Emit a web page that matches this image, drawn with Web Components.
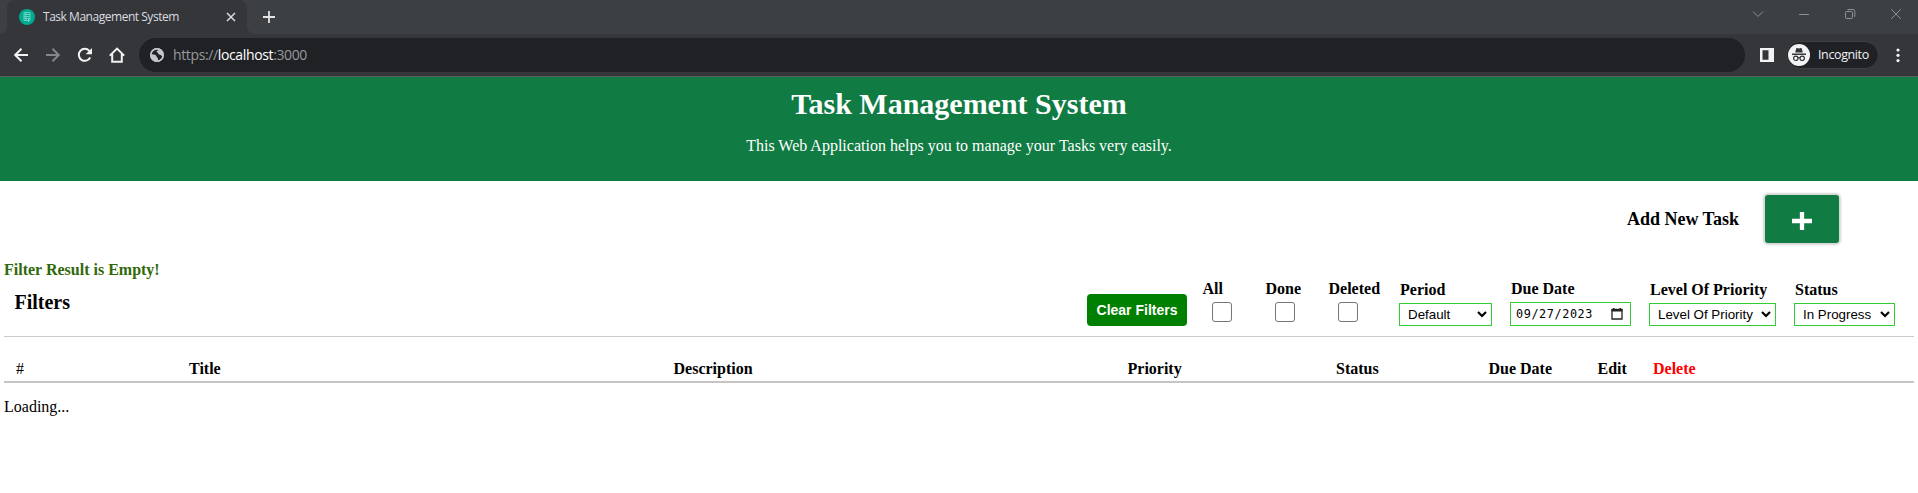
<!DOCTYPE html>
<html lang="en">
<head>
<meta charset="utf-8">
<title>Task Management System</title>
<style>
html,body{margin:0;padding:0;height:100%;background:#fff;overflow:hidden}
</style>
</head>
<body>
<task-app></task-app>
<script>
function define(name, html) {
  const t = document.createElement('template');
  t.innerHTML = html;
  customElements.define(name, class extends HTMLElement {
    constructor() {
      super();
      this.attachShadow({ mode: 'open' }).append(t.content.cloneNode(true));
    }
  });
}

define('tab-strip', `
<style>
:host{display:flex;height:34px;background:#3c4043;color:#dadce0;font:12px/34px "Open Sans","Noto Sans",sans-serif}
svg{display:block;flex:none}
.flare{width:7px;background:#35363a}
.flare i{display:block;height:34px;background:#3c4043;border-radius:0 0 7px 0}
.flare.r{width:8px}.flare.r i{border-radius:0 0 0 8px}
.tab{box-sizing:border-box;width:240px;height:34px;display:flex;align-items:center;background:#35363a;border-radius:8px 8px 0 0;padding:0 10px 0 12px}
.title{flex:1;margin-left:8px;letter-spacing:-.47px;white-space:nowrap;line-height:33px;height:34px}
.plus{margin:8px 0 0 5px}
.win{margin-left:auto;display:flex;gap:28px;padding:5px 13px 0 0}
</style>
<div class="flare"><i></i></div>
<div class="tab">
  <svg width="16" height="16" viewBox="0 0 16 16"><circle cx="8" cy="8" r="8" fill="#00a98f"/><path d="M5 3.5h6v8H5zM5 5.5h6M5 7.5h6M5 9.5h6M7 3.5v8M9.5 10v3.2" fill="none" stroke="#6fd6c6" stroke-width=".9"/></svg>
  <span class="title">Task Management System</span>
  <svg width="12" height="12" viewBox="0 0 12 12"><path d="M2 2l8 8M10 2l-8 8" stroke="#dadce0" stroke-width="1.5"/></svg>
</div>
<div class="flare r"><i></i></div>
<svg class="plus" width="18" height="18" viewBox="0 0 18 18"><path d="M9 3v12M3 9h12" stroke="#e2e4e6" stroke-width="1.8"/></svg>
<div class="win">
  <svg width="18" height="18" viewBox="0 0 18 18"><path d="M4 6.5l5 5 5-5" fill="none" stroke="#8e9194"/></svg>
  <svg width="18" height="18" viewBox="0 0 18 18"><path d="M4 9.5h10" stroke="#8e9194"/></svg>
  <svg width="18" height="18" viewBox="0 0 18 18"><rect x="4.500" y="6.500" width="7" height="7" rx="1.300" fill="none" stroke="#8e9194"/><path d="M6.500 4.500h5.500a1.800 1.800 0 0 1 1.800 1.800v5.500" fill="none" stroke="#8e9194"/></svg>
  <svg width="18" height="18" viewBox="0 0 18 18"><path d="M4.200 4.200l9.600 9.600M13.800 4.200l-9.600 9.600" stroke="#8e9194"/></svg>
</div>`);

define('address-bar', `
<style>
:host{box-sizing:border-box;display:flex;align-items:center;height:43px;background:#35363a;border-bottom:1px solid #5c5d60;padding:0 17px 0 12px;font:14px/34px "Open Sans","Noto Sans",sans-serif}
svg{display:block;flex:none}
.nav{display:flex;gap:14px;margin-right:13px}
.box{flex:1;box-sizing:border-box;height:34px;display:flex;align-items:center;border-radius:17px;background:#202124;color:#96999d;padding-left:10px}
.url{margin-left:8px;letter-spacing:-.37px;white-space:nowrap;height:34px;line-height:34px}
b{font-weight:400;color:#fff}
.side{margin:0 11px 0 14px}
.pill{box-sizing:border-box;width:93px;height:28px;border:1px solid #3e4043;border-radius:14px;background:#202124;display:flex;align-items:center;padding-left:1px;color:#f1f3f4;font-size:12.500px;letter-spacing:-.38px;white-space:nowrap}
.pill span{margin-left:8px;height:26px;line-height:25px}
.dots{margin-left:15px;margin-right:-1px}
</style>
<div class="nav">
  <svg width="18" height="18" viewBox="0 0 18 18"><path d="M16 9H3.500M9.500 2.800L3.200 9l6.300 6.200" fill="none" stroke="#f1f3f4" stroke-width="2"/></svg>
  <svg width="18" height="18" viewBox="0 0 18 18"><path d="M2 9h12.500M8.500 2.800L14.800 9l-6.300 6.200" fill="none" stroke="#85868a" stroke-width="1.900"/></svg>
  <svg width="18" height="18" viewBox="0 0 18 18"><path d="M14.200 11.500A6 6 0 1 1 13.300 4.800L15 6.500" fill="none" stroke="#f1f3f4" stroke-width="2"/><path d="M16 2v6.300H9.700z" fill="#f1f3f4"/></svg>
  <svg width="18" height="18" viewBox="0 0 18 18"><path d="M1.800 9.600L9 2.600l7.200 7M4.200 8v7.800h9.600V8" fill="none" stroke="#f1f3f4" stroke-width="2"/></svg>
</div>
<div class="box">
  <svg width="16" height="16" viewBox="0 0 16 16"><circle cx="8" cy="8" r="6.900" fill="#c4c7ca"/><path d="M9.500 2.400C8 3.500 7 3.600 6.900 5.200c1.500-.2 2.200.8 2.200 1.800 1.600-.2 2.400.4 4.500 1.400-.3 2.400-2 4.600-4.300 5.200.6-1.600.3-2.600-.7-3.100-1-.4-.8-1.500-1.700-2-1.300-.6-3-.5-4.500-.4C2.200 5 5 2.200 9.500 2.400z" fill="#202124" transform="rotate(8 8 8)"/><circle cx="8" cy="8" r="6.200" fill="none" stroke="#c4c7ca" stroke-width="1.500"/></svg>
  <span class="url">https://<b>localhost</b>:3000</span>
</div>
<svg class="side" width="16" height="16" viewBox="0 0 16 16"><path d="M1 1h14v14H1zM3.500 3.300v9.400h6V3.300z" fill="#f1f3f4" fill-rule="evenodd"/></svg>
<div class="pill">
  <svg width="22" height="22" viewBox="0 0 22 22"><circle cx="11" cy="11" r="11" fill="#f1f3f4"/><path d="M7.200 8.600l1-4q.3-.7 1-.5l1.800.5 1.800-.5q.7-.2 1 .5l1 4zM4 9.600h14v1.300H4z" fill="#35363a"/><g fill="none" stroke="#35363a" stroke-width="1.200"><circle cx="7.800" cy="14.300" r="2.200"/><circle cx="14.200" cy="14.300" r="2.200"/><path d="M10 13.900q1-.6 2 0"/></g></svg>
  <span>Incognito</span>
</div>
<svg class="dots" width="8" height="18" viewBox="0 0 8 18"><g fill="#f1f3f4"><circle cx="4" cy="4" r="1.600"/><circle cx="4" cy="9.300" r="1.600"/><circle cx="4" cy="14.600" r="1.600"/></g></svg>`);

define('page-banner', `
<style>
:host{box-sizing:border-box;display:block;height:104px;background:#107b43;color:#fff;text-align:center;padding-top:10px}
h1{margin:0;font-size:30px;line-height:34px;font-weight:700}
p{margin:16px 0 0;font-size:16px;line-height:18px}
</style>
<h1><slot name="title"></slot></h1><p><slot></slot></p>`);

define('add-task', `
<style>
:host{display:flex;justify-content:flex-end;align-items:center;height:48px;padding:14px 79px 0 0;font-weight:700;font-size:18px;line-height:20px}
button{display:grid;place-items:center;width:74px;height:48px;margin:0 0 0 26px;padding:0;border:0;border-radius:3px;background:#107b43;box-shadow:0 0 2px 2px #d6d6d6}
svg{display:block;margin-top:3px}
</style>
<span><slot></slot></span>
<button aria-label="Add"><svg width="20" height="18" viewBox="0 0 20 18"><path d="M0 9h20M10 0v18" stroke="#fff" stroke-width="4.300"/></svg></button>`);

define('check-filter', `
<style>
:host{display:block;width:63px;font-weight:700;line-height:18px}
i{display:block;box-sizing:border-box;width:20px;height:20px;margin:4px 0 4px 9px;border:1px solid #767676;border-radius:3px;background:#fff}
span{margin-left:-.5px}
</style>
<span><slot></slot></span><i></i>`);

define('select-filter', `
<style>
:host{display:block;font-weight:700;line-height:18px}
.l{padding-left:1px;display:block}
.c{box-sizing:border-box;display:flex;justify-content:space-between;align-items:center;height:23px;margin-top:4px;padding:0 4px 0 8px;border:1px solid #32cd32;background:#fff;font:13.333px/21px "Liberation Sans",Arial,sans-serif;white-space:nowrap}
svg{display:block;flex:none}
</style>
<span class="l"><slot></slot></span>
<div class="c"><slot name="value"></slot><svg width="10" height="7" viewBox="0 0 10 7"><path d="M1 1l4 4 4-4" fill="none" stroke="#000" stroke-width="2.200"/></svg></div>`);

define('date-filter', `
<style>
:host{display:block;font-weight:700;line-height:18px}
.l{padding-left:1px;display:block}
.c{box-sizing:border-box;display:flex;justify-content:space-between;align-items:center;height:24px;margin-top:4px;padding:0 7px 0 5px;border:1px solid #32cd32;background:#fff;font:11.800px/22px "DejaVu Sans Mono",monospace;white-space:nowrap;letter-spacing:.6px}
svg{display:block;flex:none}
</style>
<span class="l"><slot></slot></span>
<div class="c"><slot name="value"></slot><svg width="12" height="12" viewBox="0 0 12 12"><path d="M1 1.500h10v9.500H1z" fill="none" stroke="#222" stroke-width="1.300"/><path d="M.5 1h11v2.500H.5zM2 0h1.500v2H2zM8.500 0H10v2H8.500z" fill="#222"/></svg></div>`);

define('filter-bar', `
<style>
:host{box-sizing:border-box;display:flex;align-items:flex-end;height:58px;margin:0 4px;padding:0 19px 10px 10.500px;border-bottom:1px solid #ccc}
h2{margin:0 auto 13px 0;font-size:20px;line-height:22px}
button{width:100px;height:32px;margin:0 16px 0 0;padding:0;border:0;border-radius:4px;background:#008000;color:#fff;font:700 14px/32px "Liberation Sans",Arial,sans-serif}
date-filter{width:121px;margin:0 18px}
.p{width:93px}.v{width:127px;margin-right:18px}.s{width:101px}
check-filter:last-of-type{width:70px}
</style>
<h2>Filters</h2>
<button>Clear Filters</button>
<check-filter>All</check-filter><check-filter>Done</check-filter><check-filter>Deleted</check-filter>
<select-filter class="p">Period<span slot="value">Default</span></select-filter>
<date-filter>Due Date<span slot="value">09/27/2023</span></date-filter>
<select-filter class="v">Level Of Priority<span slot="value">Level Of Priority</span></select-filter>
<select-filter class="s">Status<span slot="value">In Progress</span></select-filter>`);

define('task-head', `
<style>
:host{display:grid;grid-template-columns:173px 484.500px 454px 208.500px 152.500px 109px 55.500px 1fr;margin:23px 4px 0;padding:0 0 3px 12px;border-bottom:2px solid #c8c4c4;font-weight:700;line-height:18px}
.n{font-weight:400}.d{color:#f00}
</style>
<span class="n">#</span><span>Title</span><span>Description</span><span>Priority</span><span>Status</span><span>Due Date</span><span>Edit</span><span class="d">Delete</span>`);

define('task-app', `
<style>
:host{display:block;width:100%;font:16px/18px "Liberation Serif","Times New Roman",serif;color:#000}
.msg{margin:18px 4px 0;color:#31680b;font-weight:700}
.load{margin:15px 4px 0}
</style>
<tab-strip></tab-strip><address-bar></address-bar>
<page-banner><span slot="title">Task Management System</span>This Web Application helps you to manage your Tasks very easily.</page-banner>
<add-task>Add New Task</add-task>
<div class="msg">Filter Result is Empty!</div>
<filter-bar></filter-bar>
<task-head></task-head>
<div class="load">Loading...</div>`);
</script>
</body>
</html>
